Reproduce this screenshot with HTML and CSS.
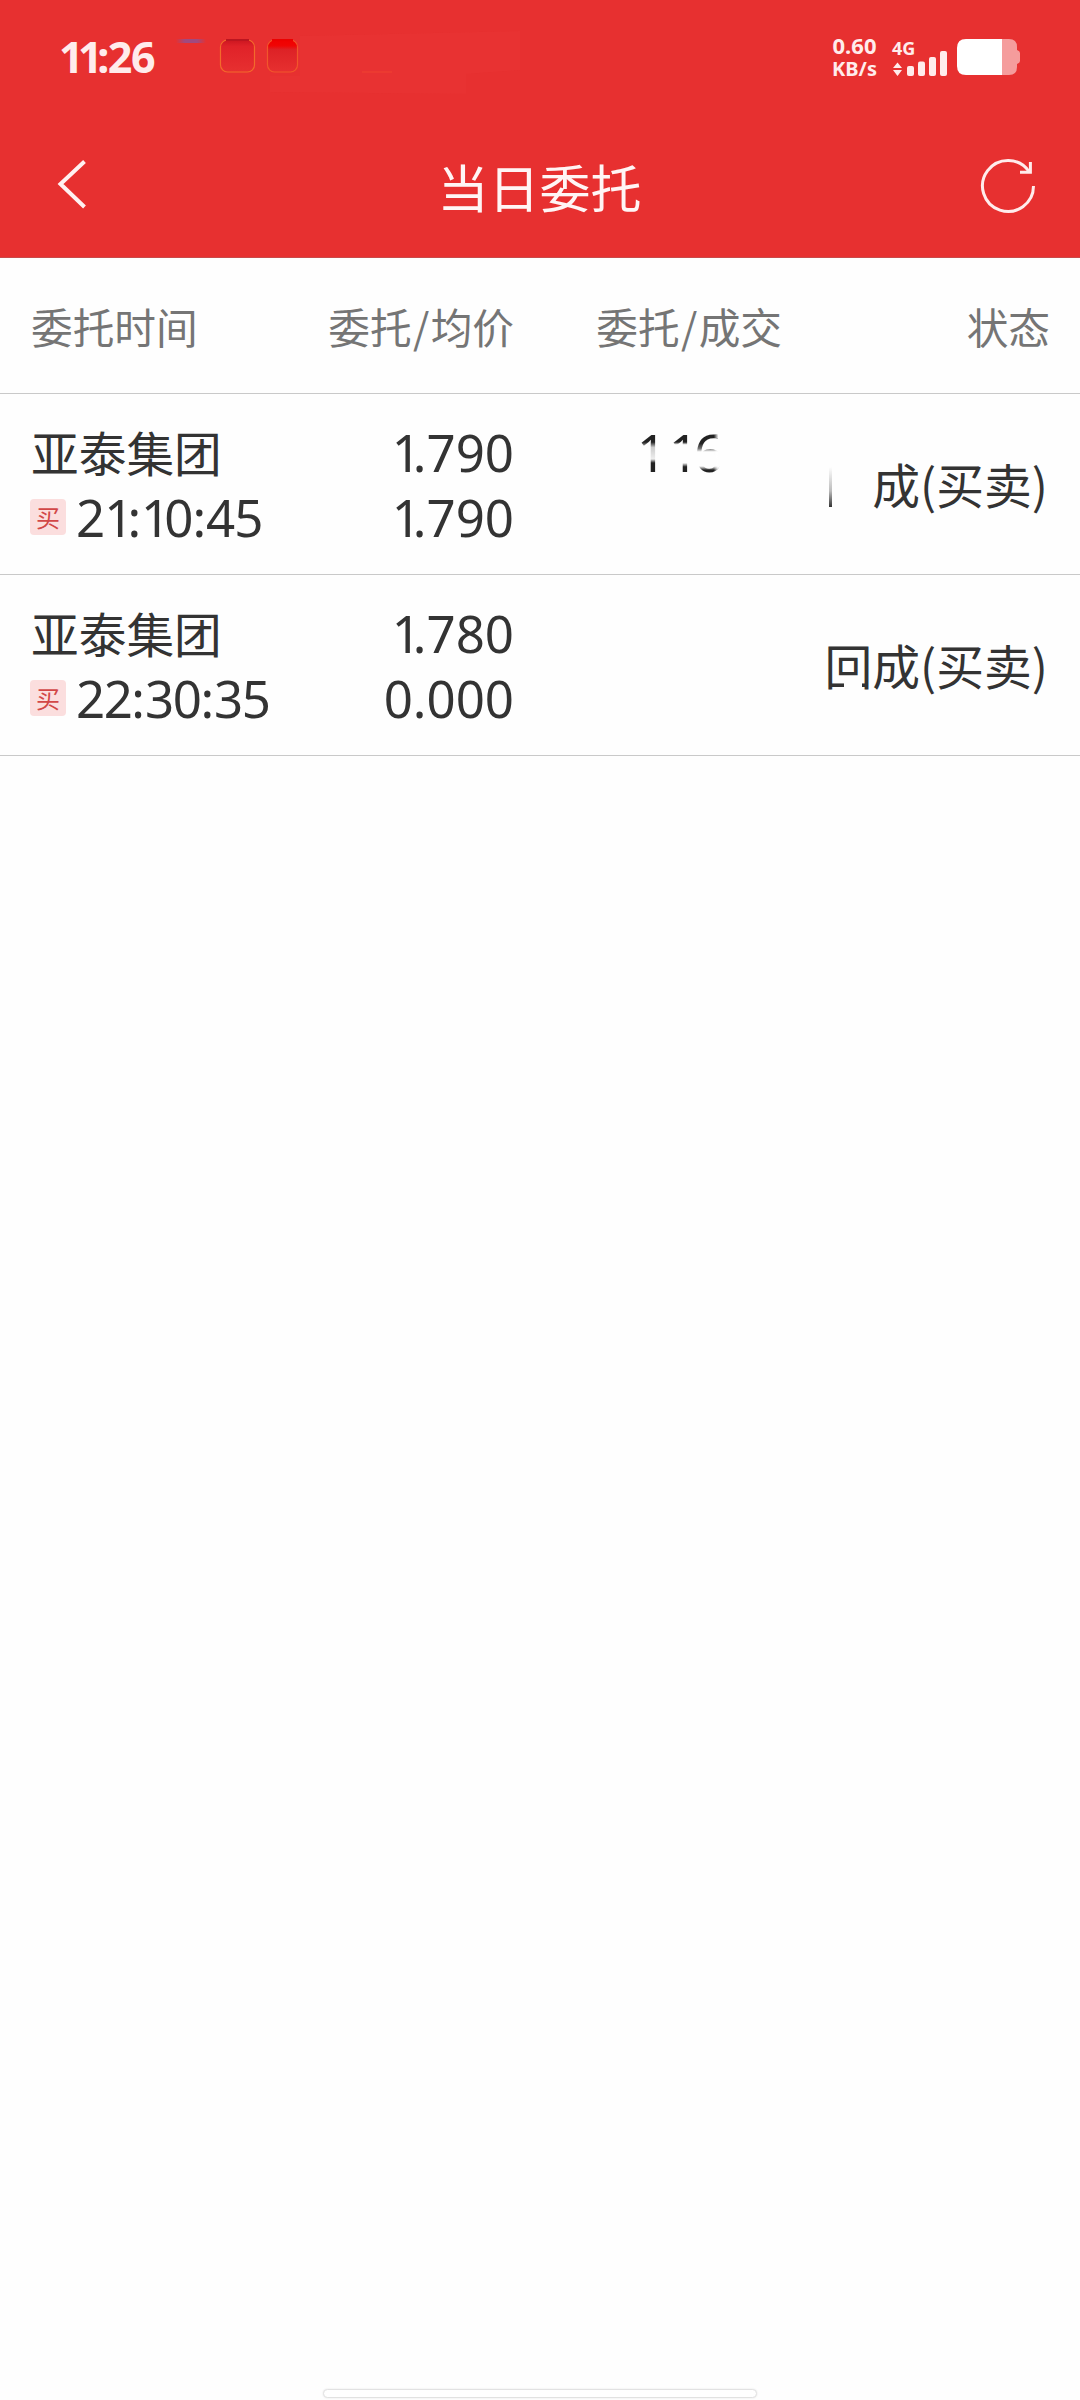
FILE: index.html
```html
<!DOCTYPE html>
<html lang="zh-CN">
<head>
<meta charset="utf-8">
<title>当日委托</title>
<link rel="stylesheet" href="styles.css">
</head>
<body>
<div class="screen">
  <header class="top">
    <div class="status">
      <div class="clock"><span class="n1">1</span><span class="n1">1</span><span class="cl">:</span>26</div>
      <svg class="notices" width="350" height="80" viewBox="170 20 350 80">
        <defs>
          <linearGradient id="g1" x1="0" y1="0" x2="0" y2="1"><stop offset="0" stop-color="#cc1620"/><stop offset=".2" stop-color="#e02229"/><stop offset="1" stop-color="#e73030"/></linearGradient>
          <linearGradient id="g2" x1="0" y1="0" x2="0" y2="1"><stop offset="0" stop-color="#f00000"/><stop offset=".18" stop-color="#f00505"/><stop offset=".3" stop-color="#dd2226"/><stop offset="1" stop-color="#e73030"/></linearGradient>
          <linearGradient id="g3" x1="0" y1="0" x2="1" y2="0"><stop offset="0" stop-color="#a04a80" stop-opacity="0"/><stop offset=".3" stop-color="#a04a80"/><stop offset=".7" stop-color="#a04a80"/><stop offset="1" stop-color="#a04a80" stop-opacity="0"/></linearGradient>
        </defs>
        <path d="M300 36L520 31Q543 48 520 70L466 74V94L270 92V76H300Z" fill="#ea3333" opacity=".5"/>
        <rect x="176" y="39" width="30" height="4" fill="url(#g3)"/>
        <rect x="220.5" y="40" width="34" height="32" rx="7" fill="url(#g1)" stroke="#f36a2b" stroke-width="1.2"/>
        <rect x="267.5" y="40" width="30" height="32" rx="7" fill="url(#g2)" stroke="#f2562b" stroke-width="1.2"/>
        <path d="M226 40H249" stroke="#bc1520" stroke-width="2"/>
        <path d="M272 40H293" stroke="#ed0000" stroke-width="2"/>
        <path d="M362 72H392" stroke="#f04330" stroke-width="1"/>
      </svg>
      <div class="net"><span class="rate">0.60</span><span class="unit">KB/s</span></div>
      <div class="cell">
        <span class="gen">4G</span>
        <svg width="56" height="28" viewBox="892 50 56 28" fill="#ffecec">
          <path d="M893 68L897.5 62.5L902 68ZM893 70H902L897.5 76Z"/>
          <rect x="907" y="66" width="7" height="10" rx="2"/><rect x="918" y="61.5" width="7" height="14.5" rx="2"/><rect x="929" y="57" width="7" height="19" rx="2"/><rect x="940" y="51" width="7" height="25" rx="2"/>
        </svg>
      </div>
      <svg class="battery" width="64" height="38" viewBox="957 38 64 38">
        <path d="M1002 39H1009Q1017 39 1017 47V50Q1020 51 1020 53V61Q1020 63 1017 64V67Q1017 75 1009 75H1002Z" fill="#f59c9c"/>
        <path d="M1002 39H966Q957 39 957 48V66Q957 75 966 75H1002Z" fill="#fff"/>
      </svg>
    </div>
    <nav class="bar">
      <svg width="40" height="60" viewBox="52 155 40 60"><path d="M84.5 161.5L60.5 184L84.5 207" fill="none" stroke="#fff1f1" stroke-width="4"/></svg>
      <h1>当日委托</h1>
      <svg width="60" height="60" viewBox="978 155 60 60" fill="none" stroke="#ffecec" stroke-width="3"><path d="M1033.5 186A25.5 25.5 0 1 1 1029 171.5"/><path d="M1020 172.3H1030.4V162"/></svg>
    </nav>
  </header>
  <main>
    <div class="row head"><span>委托时间</span><span>委托<i>/</i>均价</span><span>委托<i>/</i>成交</span><span>状态</span></div>
    <div class="row">
      <div><div class="line name">亚泰集团</div><div class="line"><b class="tag">买</b><span class="time">2<span class="n1">1</span><span class="cl">:</span><span class="n1">1</span>0<span class="cl">:</span>45</span></div></div>
      <div class="price"><div class="line"><span class="n1">1</span>.790</div><div class="line"><span class="n1">1</span>.790</div></div>
      <div class="amount"><div class="line"><span class="faded">1</span><span class="faded short">1</span><span class="faded round">6</span></div></div>
      <div class="state"><i class="trace"></i>成(买卖)</div>
    </div>
    <div class="row">
      <div><div class="line name">亚泰集团</div><div class="line"><b class="tag">买</b><span class="time tight">22<span class="cl">:</span>30<span class="cl">:</span>35</span></div></div>
      <div class="price"><div class="line"><span class="n1">1</span>.780</div><div class="line">0.000</div></div>
      <div></div>
      <div class="state"><span class="worn">回</span>成(买卖)</div>
    </div>
  </main>
  <div class="handle"></div>
</div>
</body>
</html>
```
FILE: styles.css
```css
* { box-sizing: border-box; }
body { margin: 0; background: #fefefe; }
i { font-style: normal; }
svg { display: block; flex: none; }
.screen { width: 1080px; height: 2400px; display: flex; flex-direction: column; background: #fefefe; color: #333; font-family: "Noto Sans", "Noto Sans CJK SC", sans-serif; overflow: hidden; }
.top { height: 258px; background: #e73030; border-bottom: 1px solid #c84a4a; }
.status { height: 115px; display: flex; padding-left: 59px; }
.clock { width: 111px; padding-top: 31px; font-size: 43px; line-height: 52px; font-weight: 700; color: #ffecec; white-space: nowrap; letter-spacing: -1.5px; }
.clock .n1 { letter-spacing: -5.5px; }
.notices { margin-top: 20px; }
.net { margin-left: 310px; width: 49px; padding-top: 34px; display: flex; flex-direction: column; align-items: center; font-size: 22px; line-height: 23px; font-weight: 700; color: #ffecec; }
.unit { font-size: 20px; }
.cell { margin-left: 13px; width: 65px; padding-top: 37px; }
.gen { display: block; height: 13px; font-size: 18px; line-height: 22px; font-weight: 700; color: #ffecec; }
.battery { margin-top: 38px; }
.bar { height: 142px; padding: 0 42px 3px 52px; display: flex; align-items: center; justify-content: space-between; }
h1 { margin: 0; padding: 3px 0 0 9px; font: 51px/60px "Noto Sans CJK SC", sans-serif; color: #fff5f5; }
.row { height: 181px; padding: 26px 32px 0 31px; display: grid; grid-template-columns: 240px 243px 266px 268px; border-bottom: 1px solid #c9c9c9; }
.row > :nth-child(n+2) { text-align: right; }
.head { height: 136px; padding: 0 30px 0 31px; grid-template-columns: 240px 243px 268px 268px; font: 41.7px/136px "Noto Sans CJK SC", sans-serif; color: #757575; }
.head i { display: inline-block; width: 19px; text-align: center; }
.line { height: 65px; display: flex; align-items: center; font-size: 51px; line-height: 65px; white-space: nowrap; }
.name { padding-bottom: 3px; font-family: "Noto Sans CJK SC", sans-serif; font-size: 47.7px; }
.price .line { justify-content: flex-end; }
.time { letter-spacing: -1px; }
.tight { letter-spacing: -1.5px; }
.n1 { letter-spacing: -6px; }
.price .n1 { letter-spacing: -8px; }
.time .cl { letter-spacing: 0; }
.tag { flex: none; width: 36px; height: 36px; margin: -2px 10px 0 -1px; border-radius: 4px; background: #fbdede; color: #d24747; font: 24px/35px "Noto Sans CJK SC", sans-serif; text-align: center; }
.state { font: 47.8px/127px "Noto Sans CJK SC", sans-serif; white-space: nowrap; }
.amount .line { padding-left: 123px; }
.faded { width: 32px; text-align: left; color: transparent; background: linear-gradient(#222 0 34%, #ccc 42%, #eee 60%, #222 66%); -webkit-background-clip: text; background-clip: text; }
.short { width: 25px; background-image: linear-gradient(#222 0 34%, transparent 38% 66%, #222 72%); }
.round { background-image: linear-gradient(90deg, transparent 62%, #fefefe 76%), linear-gradient(#222 0 36%, #777 44%, transparent 49% 71%, #222 77%); }
.trace { display: inline-block; width: 3px; height: 40px; margin-right: 40px; vertical-align: -3px; background: linear-gradient(#fefefe, #bbb 60%, #333); }
.worn { position: relative; }
.worn::after { content: ""; position: absolute; right: 10px; bottom: 9px; width: 18px; height: 7px; background: #fefefe; }
.handle { width: 434px; height: 9px; margin: auto auto 2px; border: 1px solid #e2e2e2; border-radius: 5px; background: #fff; box-shadow: 0 0 2px #e2e2e2; }
```
